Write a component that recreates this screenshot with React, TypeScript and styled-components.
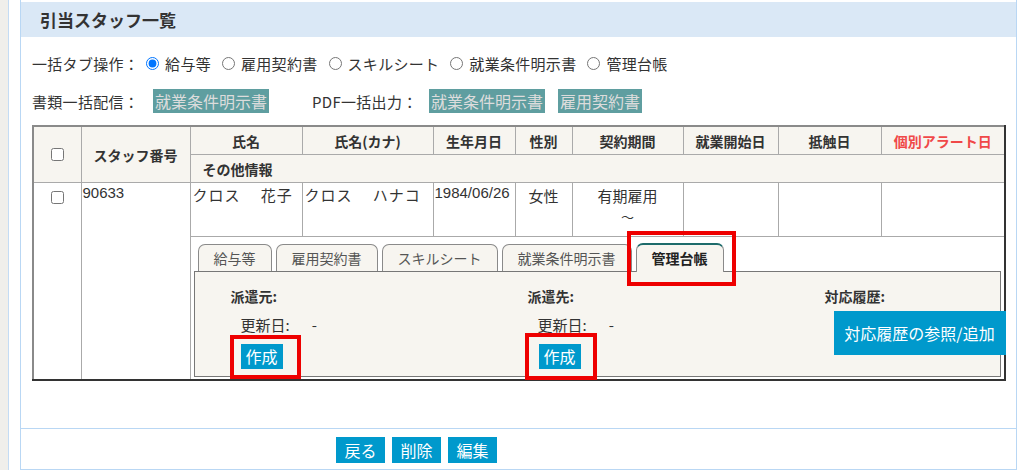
import * as React from "react";
import styled, { createGlobalStyle } from "styled-components";

const GlobalStyle = createGlobalStyle`
  html, body {
    margin: 0;
    padding: 0;
    background: #fff;
  }
  body {
    font-family: "Noto Sans CJK JP", "Noto Sans", sans-serif;
    font-size: 14px;
    color: #333;
  }
`;

const Page = styled.div`
  display: flex;
  height: 470px;
  overflow: hidden;
`;

const SideStrip = styled.div`
  width: 8px;
  flex-shrink: 0;
  background: #f0efeb;
  border-right: 1px solid #c4dcf4;
`;

const Gutter = styled.div`
  width: 11px;
  flex-shrink: 0;
`;

const Panel = styled.section`
  width: 995px;
  flex-shrink: 0;
  border-left: 1px solid #b9d7f4;
  border-right: 1px solid #b9d7f4;
  padding-top: 2px;
  display: flex;
  flex-direction: column;
`;

const PanelTitle = styled.h2`
  margin: 0;
  height: 35px;
  line-height: 35px;
  padding-left: 19px;
  background: #dae8f6;
  font-size: 17px;
  font-weight: bold;
  color: #333;
`;

const PanelBody = styled.div`
  flex: 1;
  padding: 14px 10px 0 11px;
`;

const OptionRow = styled.div<{ $mt?: number }>`
  display: flex;
  align-items: center;
  height: 24px;
  margin-top: ${(p) => p.$mt ?? 0}px;
  font-size: 15px;
  letter-spacing: 0.3px;
  white-space: nowrap;
`;

const OptionLabel = styled.span<{ $w?: number; $mr?: number }>`
  display: inline-block;
  width: ${(p) => (p.$w ? `${p.$w}px` : "auto")};
  margin-right: ${(p) => p.$mr ?? 10}px;
`;

const RadioItem = styled.label`
  display: inline-flex;
  align-items: center;
  margin-right: 11px;

  input {
    margin: 0 6px 0 0;
    width: 13px;
    height: 13px;
  }
`;

const DocButton = styled.button<{ $mr?: number }>`
  height: 24px;
  padding: 0 2px;
  margin-right: ${(p) => p.$mr ?? 0}px;
  border: none;
  background: #5f9ea0;
  color: #dcdcdc;
  font-family: inherit;
  font-size: 16px;
  line-height: 24px;
`;

const StaffTable = styled.table`
  margin-top: 12px;
  width: 974px;
  table-layout: fixed;
  border-collapse: collapse;
  border-top: 2px solid #8a8a8a;
  border-left: 2px solid #8a8a8a;
  border-right: 2px solid #333;
  border-bottom: 2px solid #333;

  td,
  th {
    border: 1px solid #aaa;
    padding: 0;
  }
`;

const HeadCell = styled.th<{ $alert?: boolean; $left?: boolean }>`
  background: #f7f5f0;
  font-size: 14px;
  font-weight: bold;
  height: 27px;
  color: ${(p) => (p.$alert ? "#f04848" : "#333")};
  text-align: ${(p) => (p.$left ? "left" : "center")};
  padding-left: ${(p) => (p.$left ? "12px" : "0")} !important;
`;

const CheckCell = styled.td<{ $top?: boolean; $head?: boolean }>`
  text-align: center;
  vertical-align: ${(p) => (p.$top ? "top" : "middle")};
  padding-top: ${(p) => (p.$top ? "5px" : "0")} !important;
  background: ${(p) => (p.$head ? "#f7f5f0" : "#fff")};

  input {
    margin: 0;
    width: 13px;
    height: 13px;
  }
`;

const DataRow = styled.tr`
  height: 54px;
`;

const DataCell = styled.td<{ $center?: boolean; $mono?: boolean }>`
  vertical-align: top;
  text-align: ${(p) => (p.$center ? "center" : "left")};
  font-family: ${(p) =>
    p.$mono ? '"Liberation Sans", Arial, sans-serif' : "inherit"};
  font-size: 15px;
  line-height: 20px;
  padding: ${(p) =>
    p.$mono ? "0 0 0 1px" : p.$center ? "3px 0 0" : "2px 0 0 2px"} !important;
  letter-spacing: ${(p) => (p.$mono || p.$center ? "0" : "1px")};
  white-space: nowrap;
  overflow: hidden;
  color: #333;
`;

const Tilde = styled.span`
  display: inline-block;
  margin-top: 2px;
  font-size: 13px;
  line-height: 16px;
`;

const StaffNoCell = styled.td`
  vertical-align: top;
  font-family: "Liberation Sans", Arial, sans-serif;
  font-size: 15px;
  line-height: 20px;
  padding: 0 0 0 1px !important;
`;

const TabCell = styled.td`
  vertical-align: top;
  padding: 6px 3px 2px 3px !important;
`;

const TabBar = styled.div`
  display: flex;
  gap: 4px;
  padding-left: 4px;
  align-items: flex-end;
`;

const Tab = styled.div<{ $active?: boolean }>`
  position: relative;
  height: ${(p) => (p.$active ? "27px" : "26px")};
  line-height: 26px;
  padding: 0 15px;
  margin-bottom: ${(p) => (p.$active ? "-1px" : "0")};
  border: 1px solid #8a8a8a;
  border-top: ${(p) => (p.$active ? "2px solid #1d6b6b" : "1px solid #8a8a8a")};
  border-bottom: none;
  border-radius: 7px 7px 0 0;
  background: #f7f5f0;
  font-size: 14px;
  font-weight: ${(p) => (p.$active ? "bold" : "normal")};
  color: ${(p) => (p.$active ? "#222" : "#555")};
  white-space: nowrap;
  z-index: ${(p) => (p.$active ? 1 : 0)};
`;

const TabPanel = styled.div`
  display: flex;
  height: 104px;
  border: 1px solid #777;
  background: #f7f5f0;
`;

const LedgerColumn = styled.div`
  width: 297px;
  flex-shrink: 0;
  padding: 14px 0 0 36px;
  box-sizing: border-box;
`;

const FieldTitle = styled.div`
  font-size: 14px;
  font-weight: bold;
  line-height: 20px;
  color: #333;
`;

const UpdatedRow = styled.div`
  margin: 9px 0 0 10px;
  font-size: 15px;
  line-height: 20px;
  display: flex;
  gap: 22px;
`;

const Marked = styled.div<{ $mt: number; $ml: number }>`
  position: relative;
  display: inline-block;
  margin-top: ${(p) => p.$mt}px;
  margin-left: ${(p) => p.$ml}px;
`;

const Highlight = styled.span<{ $t: number; $r: number; $b: number; $l: number }>`
  position: absolute;
  top: ${(p) => p.$t}px;
  right: ${(p) => p.$r}px;
  bottom: ${(p) => p.$b}px;
  left: ${(p) => p.$l}px;
  border: 4px solid #ee0000;
  pointer-events: none;
  z-index: 2;
`;

const ActionButton = styled.button<{ $wide?: boolean }>`
  display: block;
  height: ${(p) => (p.$wide ? "44px" : "25px")};
  width: ${(p) => (p.$wide ? "172px" : "auto")};
  padding: 0 5px;
  border: none;
  background: #0099cc;
  color: #fff;
  font-family: inherit;
  font-size: 16px;
  line-height: 25px;
  white-space: nowrap;
`;

const Footer = styled.div`
  height: 42px;
  border-top: 1px solid #b9d7f4;
  border-bottom: 1px solid #b9d7f4;
  padding: 8px 0 0 315px;
  box-sizing: border-box;
  display: flex;
  gap: 7px;
  align-items: flex-start;
`;

const FooterButton = styled.button`
  height: 26px;
  width: 49px;
  padding: 0;
  border: none;
  background: #0099cc;
  color: #fff;
  font-family: inherit;
  font-size: 16px;
  line-height: 26px;
`;

const tabTypes = ["給与等", "雇用契約書", "スキルシート", "就業条件明示書", "管理台帳"];

const columns: { label: string; alert?: boolean }[] = [
  { label: "氏名" },
  { label: "氏名(カナ)" },
  { label: "生年月日" },
  { label: "性別" },
  { label: "契約期間" },
  { label: "就業開始日" },
  { label: "抵触日" },
  { label: "個別アラート日", alert: true },
];

const LedgerTabs = () => (
  <>
    <TabBar>
      {tabTypes.map((t) =>
        t === "管理台帳" ? (
          <Tab key={t} $active>
            {t}
            <Highlight $t={-14} $r={-13} $b={-14} $l={-10} />
          </Tab>
        ) : (
          <Tab key={t}>{t}</Tab>
        )
      )}
    </TabBar>
    <TabPanel>
      <LedgerColumn>
        <FieldTitle>派遣元:</FieldTitle>
        <UpdatedRow>
          <span>更新日:</span>
          <span>-</span>
        </UpdatedRow>
        <Marked $mt={9} $ml={10}>
          <ActionButton>作成</ActionButton>
          <Highlight $t={-9} $r={-18} $b={-10} $l={-11} />
        </Marked>
      </LedgerColumn>
      <LedgerColumn>
        <FieldTitle>派遣先:</FieldTitle>
        <UpdatedRow>
          <span>更新日:</span>
          <span>-</span>
        </UpdatedRow>
        <Marked $mt={9} $ml={11}>
          <ActionButton>作成</ActionButton>
          <Highlight $t={-11} $r={-16} $b={-11} $l={-14} />
        </Marked>
      </LedgerColumn>
      <LedgerColumn>
        <FieldTitle>対応履歴:</FieldTitle>
        <Marked $mt={5} $ml={9}>
          <ActionButton $wide>対応履歴の参照/追加</ActionButton>
        </Marked>
      </LedgerColumn>
    </TabPanel>
  </>
);

const App = () => {
  return (
    <Page>
      <GlobalStyle />
      <SideStrip />
      <Gutter />
      <Panel>
        <PanelTitle>引当スタッフ一覧</PanelTitle>
        <PanelBody>
          <OptionRow>
            <OptionLabel $mr={7}>一括タブ操作：</OptionLabel>
            {tabTypes.map((t, i) => (
              <RadioItem key={t}>
                <input type="radio" name="bulkTab" defaultChecked={i === 0} />
                {t}
              </RadioItem>
            ))}
          </OptionRow>
          <OptionRow $mt={14}>
            <OptionLabel $w={111}>書類一括配信：</OptionLabel>
            <DocButton $mr={43}>就業条件明示書</DocButton>
            <OptionLabel $w={107}>PDF一括出力：</OptionLabel>
            <DocButton $mr={13}>就業条件明示書</DocButton>
            <DocButton>雇用契約書</DocButton>
          </OptionRow>

          <StaffTable>
            <colgroup>
              <col style={{ width: 48 }} />
              <col style={{ width: 109 }} />
              <col style={{ width: 112 }} />
              <col style={{ width: 131 }} />
              <col style={{ width: 82 }} />
              <col style={{ width: 57 }} />
              <col style={{ width: 111 }} />
              <col style={{ width: 95 }} />
              <col style={{ width: 103 }} />
              <col style={{ width: 124 }} />
            </colgroup>
            <thead>
              <tr>
                <CheckCell as="th" rowSpan={2} $head>
                  <input type="checkbox" />
                </CheckCell>
                <HeadCell rowSpan={2}>スタッフ番号</HeadCell>
                {columns.map((c) => (
                  <HeadCell key={c.label} $alert={c.alert}>
                    {c.label}
                  </HeadCell>
                ))}
              </tr>
              <tr>
                <HeadCell colSpan={8} $left>
                  その他情報
                </HeadCell>
              </tr>
            </thead>
            <tbody>
              <DataRow>
                <CheckCell rowSpan={2} $top>
                  <input type="checkbox" />
                </CheckCell>
                <StaffNoCell rowSpan={2}>90633</StaffNoCell>
                <DataCell>クロス　 花子</DataCell>
                <DataCell>クロス　 ハナコ</DataCell>
                <DataCell $mono>1984/06/26</DataCell>
                <DataCell $center>女性</DataCell>
                <DataCell $center>
                  有期雇用
                  <br />
                  <Tilde>〜</Tilde>
                </DataCell>
                <DataCell />
                <DataCell />
                <DataCell />
              </DataRow>
              <tr>
                <TabCell colSpan={8}>
                  <LedgerTabs />
                </TabCell>
              </tr>
            </tbody>
          </StaffTable>
        </PanelBody>
        <Footer>
          <FooterButton>戻る</FooterButton>
          <FooterButton>削除</FooterButton>
          <FooterButton>編集</FooterButton>
        </Footer>
      </Panel>
    </Page>
  );
};

export default App;
